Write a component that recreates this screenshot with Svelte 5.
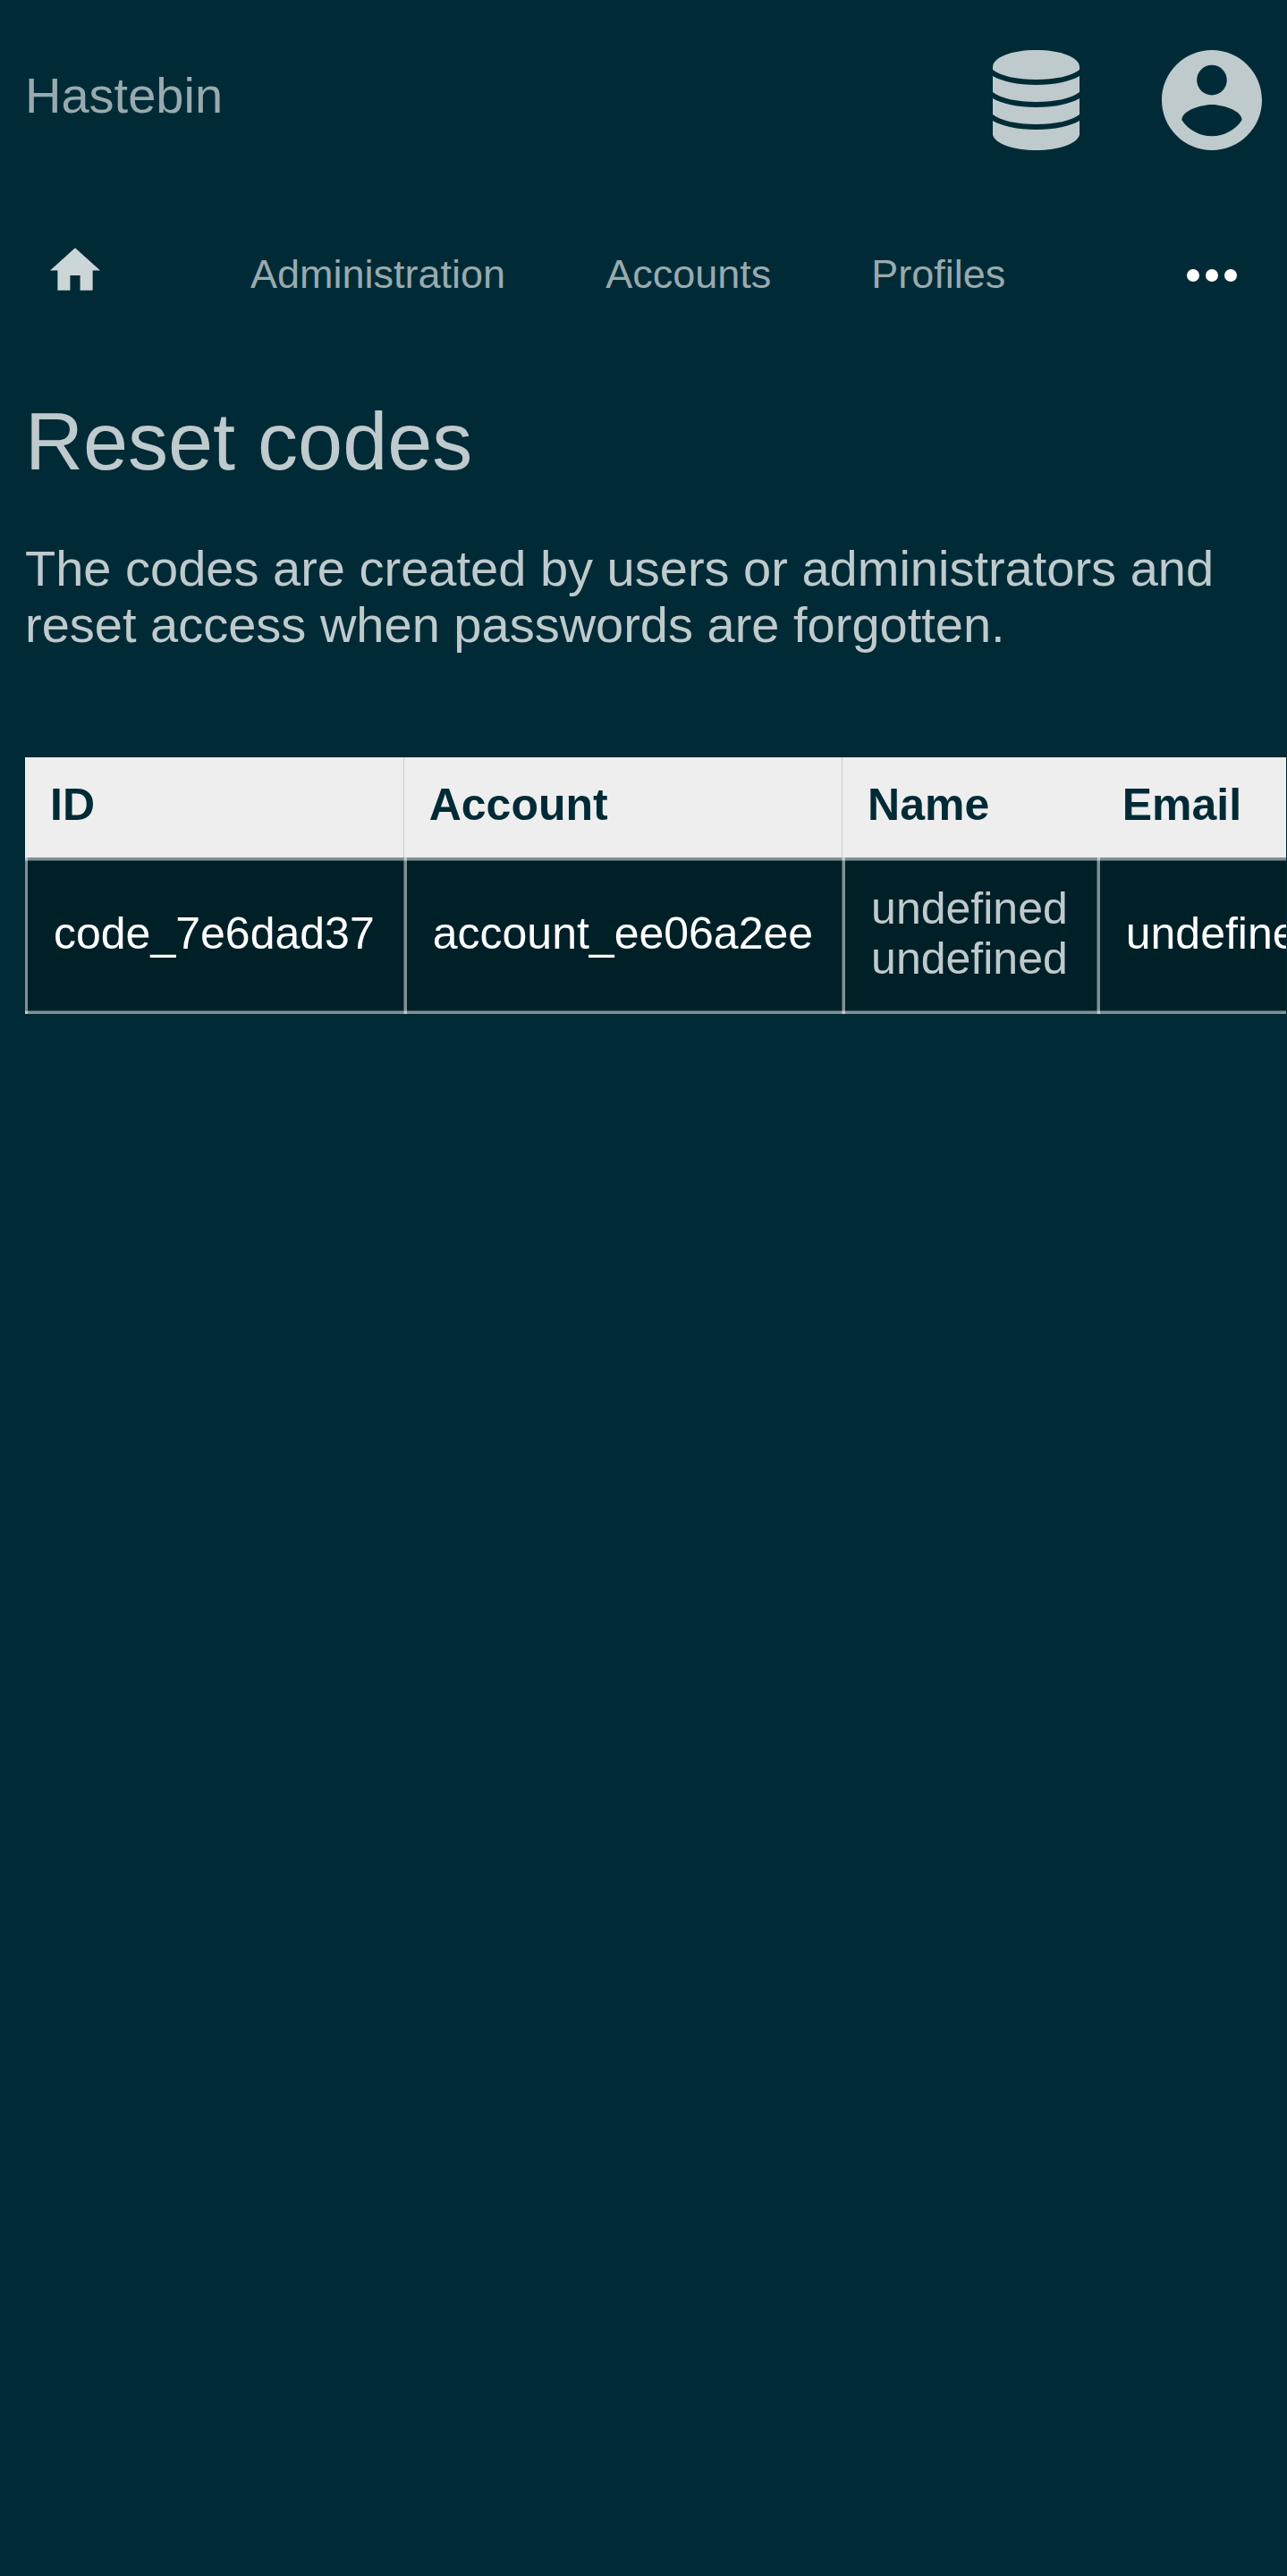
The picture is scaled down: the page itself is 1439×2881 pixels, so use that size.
<script lang="ts">
  const links = ['Administration', 'Accounts', 'Profiles'];
  const codes = [
    {
      id: 'code_7e6dad37',
      account: 'account_ee06a2ee',
      first: 'undefined',
      last: 'undefined',
      email: 'undefined',
    },
  ];
</script>

<header>
  <a class="brand" href="/">Hastebin</a>
  <div class="tools">
    <button type="button" class="tool" aria-label="Administration menu">
      <svg class="database" viewBox="0 0 98 112" aria-hidden="true">
        <path d="M0 19C0 8 21 0 48.500 0S97 8 97 19V22C88 29 70 33 48.500 33S9 29 0 22Z" />
        <path d="M0 29C10 35 28 39 48.500 39S87 35 97 29V47C88 54 70 58 48.500 58S9 54 0 47Z" />
        <path d="M0 54C10 60 28 64 48.500 64S87 60 97 54V72C88 79 70 83 48.500 83S9 79 0 72Z" />
        <path d="M0 79C10 85 28 89 48.500 89S87 85 97 79V95C94 105 74 112 48.500 112S3 105 0 95Z" />
      </svg>
    </button>
    <button type="button" class="tool" aria-label="Account menu">
      <svg class="account" viewBox="2 2 20 20" aria-hidden="true">
        <path d="M12 2C6.480 2 2 6.480 2 12s4.480 10 10 10 10-4.480 10-10S17.520 2 12 2zm0 3c1.660 0 3 1.340 3 3s-1.340 3-3 3-3-1.340-3-3 1.340-3 3-3zm0 14.200c-2.500 0-4.710-1.280-6-3.220.03-1.990 4-3.080 6-3.080 1.990 0 5.970 1.090 6 3.080-1.290 1.940-3.500 3.220-6 3.220z" />
      </svg>
    </button>
  </div>
</header>

<nav aria-label="Main">
  <a class="home" href="/home" aria-label="Home">
    <svg viewBox="2 3 20 17" aria-hidden="true">
      <path d="M10 20v-6h4v6h5v-8h3L12 3 2 12h3v8z" />
    </svg>
  </a>
  {#each links as link}
    <a href={'/' + link.toLowerCase()}>{link}</a>
  {/each}
  <button type="button" class="more" aria-label="More">
    <svg viewBox="0 0 56 14" aria-hidden="true">
      <circle cx="7" cy="7" r="7" />
      <circle cx="28" cy="7" r="7" />
      <circle cx="49" cy="7" r="7" />
    </svg>
  </button>
</nav>

<main>
  <h1>Reset codes</h1>
  <p>The codes are created by users or administrators and reset access when passwords are forgotten.</p>
  <div class="scroller">
    <table>
      <thead>
        <tr>
          <th scope="col">ID</th>
          <th scope="col">Account</th>
          <th scope="col">Name</th>
          <th scope="col">Email</th>
        </tr>
      </thead>
      <tbody>
        {#each codes as code}
          <tr>
            <td><a href={'/codes/' + code.id}>{code.id}</a></td>
            <td><a href={'/accounts/' + code.account}>{code.account}</a></td>
            <td>{code.first}<br />{code.last}</td>
            <td><a href={'mailto:' + code.email}>{code.email}</a></td>
          </tr>
        {/each}
      </tbody>
    </table>
  </div>
</main>

<style>
  :global(body) {
    background: #002b36;
    color: #bfcacd;
    font-family: 'Liberation Sans', Arial, sans-serif;
    font-size: 56px;
    line-height: 63px;
  }

  a {
    color: inherit;
    text-decoration: none;
  }

  button {
    padding: 0;
    border: 0;
    background: none;
    color: inherit;
    cursor: pointer;
  }

  svg {
    display: block;
    fill: currentColor;
  }

  header {
    display: flex;
    align-items: center;
    justify-content: space-between;
    padding: 56px 28px;
  }

  .brand {
    padding-bottom: 12px;
    color: #99aaaf;
  }

  .tools {
    display: flex;
    gap: 84px;
  }

  .tool {
    display: flex;
    justify-content: center;
    width: 112px;
  }

  .database {
    width: 98px;
    height: 112px;
  }

  .account {
    width: 112px;
    height: 112px;
  }

  nav {
    display: flex;
    align-items: center;
    height: 168px;
    color: #99aaaf;
    font-size: 45px;
  }

  nav a {
    padding: 0 56px 4px;
  }

  nav .home {
    margin-right: 56px;
    padding-bottom: 14px;
    color: #ccd5d7;
  }

  .home svg {
    width: 56px;
    height: 48px;
  }

  .more {
    margin-left: auto;
    padding: 0 56px;
    color: #fff;
  }

  .more svg {
    width: 56px;
    height: 14px;
  }

  main {
    padding: 52px 0 28px 28px;
  }

  h1 {
    margin: 0;
    font-size: 90px;
    font-weight: 400;
    line-height: 101px;
  }

  p {
    margin: 59px 28px 117px 0;
  }

  .scroller {
    overflow: hidden;
    margin-right: 1px;
  }

  table {
    border-spacing: 0;
    font-size: 50px;
    line-height: 56px;
    white-space: nowrap;
  }

  th {
    padding: 25px 28px 31px;
    background: #eee;
    color: #002b36;
    text-align: left;
  }

  th:nth-child(-n + 2) {
    box-shadow: inset -1px 0 #ccc;
  }

  /* Translucent rules, so that they brighten where they cross */
  td {
    --rule: rgb(255 255 255 / 50%);
    --soft: rgb(255 255 255 / 25%);
    padding: 29px 33px 34px 32px;
    background:
      linear-gradient(var(--rule) 3px, var(--soft) 3px) top / 100% 4px no-repeat,
      linear-gradient(var(--soft) 1px, var(--rule) 1px) bottom / 100% 4px no-repeat,
      linear-gradient(var(--rule), var(--rule)) left / 3px 100% no-repeat,
      linear-gradient(var(--soft), var(--soft)) right / 1px 100% no-repeat,
      #002028;
  }

  td a {
    color: #fff;
  }
</style>
